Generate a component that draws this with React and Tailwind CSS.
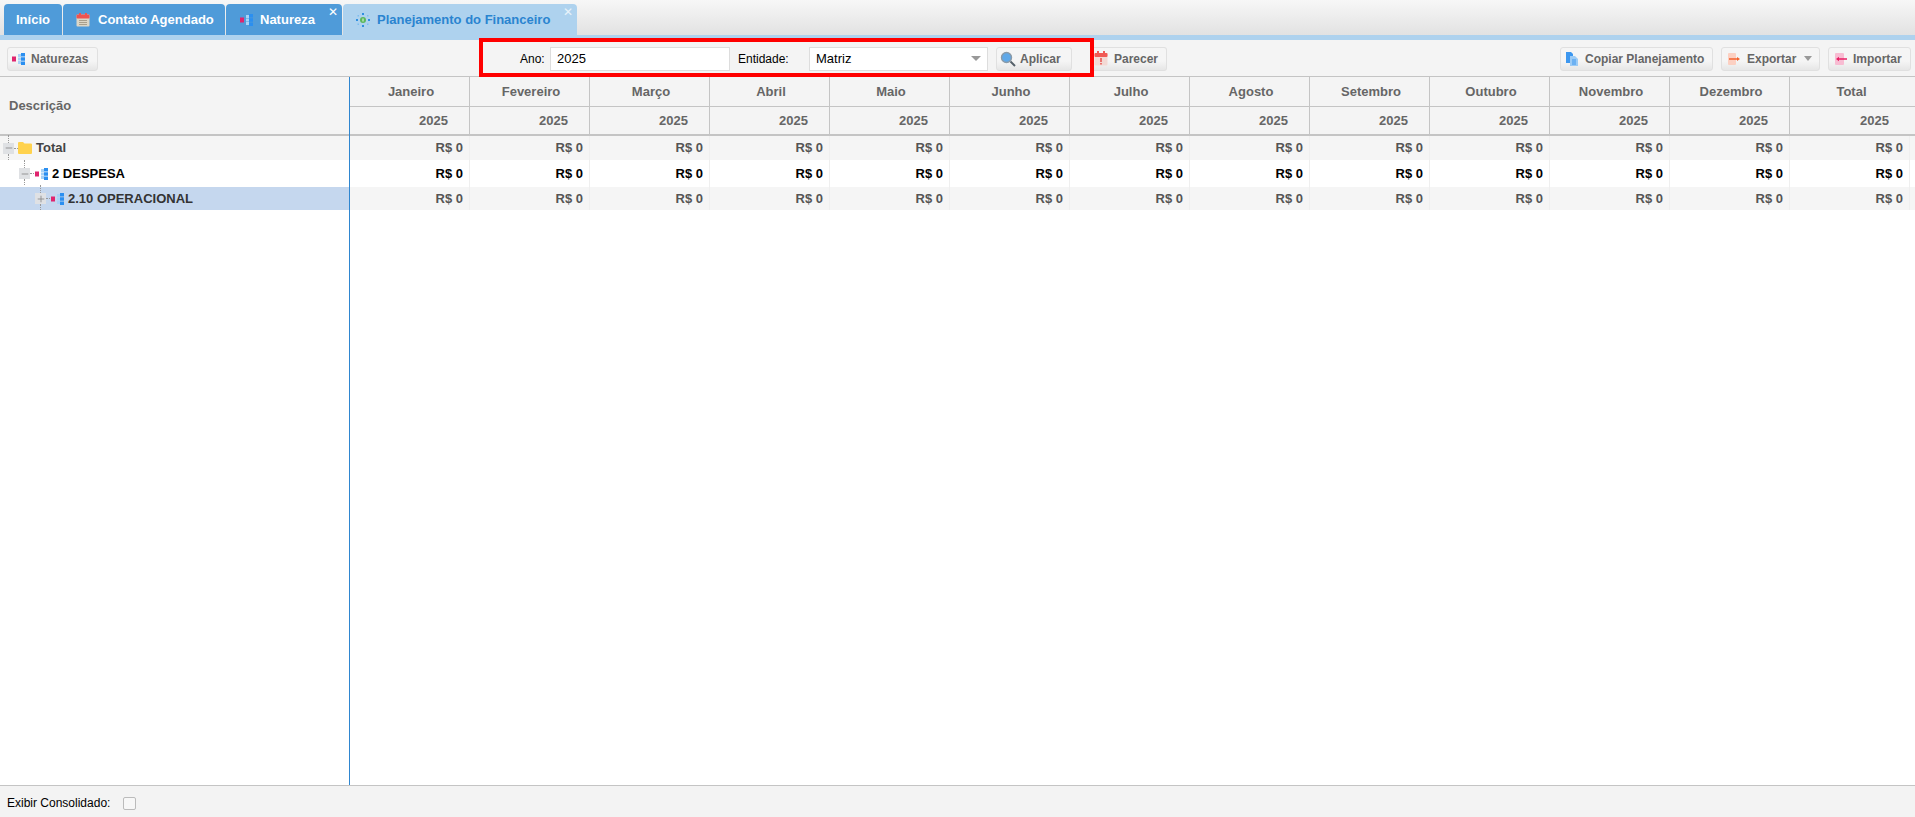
import { Plus, Minus } from "lucide-react";

const meses = ["Janeiro", "Fevereiro", "Março", "Abril", "Maio", "Junho", "Julho", "Agosto", "Setembro", "Outubro", "Novembro", "Dezembro", "Total"];

function TreeIcon({ className = "" }) {
  return (
    <svg width="13" height="12" viewBox="0 0 13 12" className={className}>
      <rect x="0" y="3.500" width="4" height="5" fill="#e0246e" />
      <path d="M6 1h3v3H6zM6 4.500h3v3H6zM6 8h3v3H6z" fill="#a8d2f6" />
      <path d="M9 0h4v3.500H9zM9 4.300h4v3.400H9zM9 8.500h4V12H9z" fill="#2b8ff0" />
    </svg>
  );
}

function CalendarIcon() {
  return (
    <svg width="14" height="14" viewBox="0 0 14 14">
      <rect x="0.500" y="1.500" width="13" height="12" rx="1" fill="#dcd6c6" />
      <rect x="0.500" y="1.500" width="13" height="4" rx="1" fill="#ef5350" />
      <rect x="3" y="0" width="2" height="3" fill="#ef5350" />
      <rect x="9" y="0" width="2" height="3" fill="#ef5350" />
      <path d="M3 7.500h8M3 9.500h8M3 11.500h8" stroke="#a89f8c" strokeWidth="1" />
    </svg>
  );
}

function PlanIcon() {
  return (
    <svg width="14" height="14" viewBox="0 0 14 14">
      <circle cx="7" cy="7" r="3" fill="#5cb85c" />
      <path d="M7 5.500v3" stroke="#e8f5e8" strokeWidth="1" />
      <path d="M6 0h2v2H6zM6 12h2v2H6zM0 6h2v2H0zM12 6h2v2h-2z" fill="#2f8fe0" />
      <path d="M1.500 2h1.500v1.500H1.500zM11 2h1.500v1.500H11zM1.500 10.500h1.500V12H1.500zM11 10.500h1.500V12H11z" fill="#7fbdee" />
    </svg>
  );
}

function SearchIcon() {
  return (
    <svg width="16" height="16" viewBox="0 0 16 16">
      <circle cx="6.500" cy="6.500" r="5" fill="#5fa8e8" stroke="#8a9aa8" strokeWidth="1.400" />
      <path d="M10.500 10.500 15 15" stroke="#55606a" strokeWidth="2" />
    </svg>
  );
}

function AlertCalendarIcon() {
  return (
    <svg width="14" height="15" viewBox="0 0 14 15">
      <rect x="0.500" y="2" width="13" height="12.500" rx="1" fill="#f3d9d4" />
      <rect x="0.500" y="2" width="13" height="4" rx="1" fill="#f05a55" />
      <rect x="3" y="0" width="2" height="3" fill="#f05a55" />
      <rect x="9" y="0" width="2" height="3" fill="#f05a55" />
      <path d="M7 7v4M7 12v1.500" stroke="#e8504c" strokeWidth="1.500" />
    </svg>
  );
}

function CopyIcon() {
  return (
    <svg width="12" height="14" viewBox="0 0 12 14">
      <path d="M0 0h5l2 2v9H0z" fill="#3d97ef" />
      <path d="M4 4h5l3 3v7H4z" fill="#9ccbf5" />
      <path d="M6 8h4M6 10h4M6 12h4" stroke="#3d97ef" strokeWidth="1" />
    </svg>
  );
}

function ExportIcon() {
  return (
    <svg width="12" height="12" viewBox="0 0 12 12">
      <rect x="0" y="0" width="8" height="12" rx="1" fill="#fcd0c2" />
      <path d="M1 6h8" stroke="#f4622e" strokeWidth="1.500" />
      <path d="M9 4l3 2-3 2z" fill="#f4622e" />
    </svg>
  );
}

function ImportIcon() {
  return (
    <svg width="12" height="12" viewBox="0 0 12 12">
      <rect x="0" y="0" width="9" height="12" rx="1" fill="#f8bcd2" />
      <path d="M4 6h8" stroke="#e91e63" strokeWidth="1.500" />
      <path d="M4 3.800 1 6l3 2.200z" fill="#e91e63" />
    </svg>
  );
}

function FolderIcon() {
  return (
    <svg width="14" height="12" viewBox="0 0 14 12">
      <path d="M0 1a1 1 0 0 1 1-1h4l1.500 1.500H13a1 1 0 0 1 1 1V11a1 1 0 0 1-1 1H1a1 1 0 0 1-1-1z" fill="#ffd24d" />
    </svg>
  );
}

function ToolButton({ icon, label, arrow, className = "" }) {
  return (
    <button className={`h-6 flex items-center rounded-[3px] border border-[#e0e0e0] bg-gradient-to-b from-[#f5f5f5] from-60% to-[#e6e6e6] text-[12px] font-bold text-[#666] ${className}`}>
      {icon}
      <span>{label}</span>
      {arrow && <span className="ml-2 border-x-[4px] border-t-[5px] border-x-transparent border-t-[#999]" />}
    </button>
  );
}

function Tab({ label, icon, width, active, close }) {
  return (
    <div className={`relative h-[31px] flex items-center rounded-t-[4px] text-[13px] font-bold ${width} ${active ? "bg-[#aed2ee] text-[#2a84d0]" : "bg-[#4f9bd9] text-white"}`}>
      {icon}
      <span>{label}</span>
      {close && <span className={`absolute right-1 top-0 text-[12px] font-normal leading-[16px] ${active ? "text-[#e8f2fa]" : "text-white"}`}>✕</span>}
    </div>
  );
}

function Expander({ open }) {
  return (
    <span className="relative w-[11px] h-[11px] shrink-0 flex items-center justify-center bg-[#dfe1e4]">
      <span className="absolute left-[5px] bottom-[11px] h-[8px] border-l border-dotted border-[#999]" />
      <span className="absolute left-[5px] top-[11px] h-[6px] border-l border-dotted border-[#999]" />
      <span className="absolute left-[11px] top-[5px] w-[4px] border-t border-dotted border-[#999]" />
      {open ? <Minus size={10} className="text-[#888]" /> : <Plus size={10} className="text-[#888]" />}
    </span>
  );
}

function ValueCells({ className = "" }) {
  return (
    <div className="flex h-full">
      {meses.map((m) => (
        <div key={m} className={`w-[120px] h-full flex items-center justify-end pr-[6px] border-r border-[#efefef] text-[13px] font-bold ${className}`}>
          R$ 0
        </div>
      ))}
    </div>
  );
}

export default function App() {
  return (
    <div className="relative h-[817px] w-[1915px] flex flex-col overflow-hidden bg-white font-['Liberation_Sans',Arial,sans-serif]">
      {/* abas */}
      <div className="h-[35px] flex items-end gap-px pl-1 bg-gradient-to-b from-[#f7f7f7] to-[#e2e2e2]">
        <Tab label="Início" width="w-[58px] pl-3" />
        <Tab label="Contato Agendado" width="w-[162px] pl-[13px]" icon={<span className="mr-[8px]"><CalendarIcon /></span>} />
        <Tab label="Natureza" width="w-[116px] pl-[14px]" close icon={<span className="mr-[7px]"><TreeIcon /></span>} />
        <Tab label="Planejamento do Financeiro" width="w-[234px] pl-[13px]" active close icon={<span className="mr-[7px]"><PlanIcon /></span>} />
      </div>
      <div className="h-[5px] bg-[#aed2ee]" />

      {/* barra de ferramentas */}
      <div className="h-[37px] shrink-0 flex items-center pt-[1px] pl-[7px] pr-1 bg-[#f4f4f4] border-b border-[#c4c4c4] text-[12px] text-black">
        <ToolButton label="Naturezas" className="w-[91px] pl-[4px]" icon={<TreeIcon className="mr-[6px]" />} />
        <span className="ml-[422px] w-[30px]">Ano:</span>
        <input readOnly value="2025" className="h-6 w-[180px] px-[6px] border border-[#ddd] bg-white text-[13px] outline-none" />
        <span className="ml-2 w-[71px]">Entidade:</span>
        <div className="h-6 w-[179px] px-[6px] flex items-center justify-between border border-[#ddd] bg-white text-[13px]">
          <span>Matriz</span>
          <span className="border-x-[5px] border-t-[5px] border-x-transparent border-t-[#999]" />
        </div>
        <ToolButton label="Aplicar" className="ml-[8px] w-[76px] pl-[3px]" icon={<span className="mr-[4px]"><SearchIcon /></span>} />
        <ToolButton label="Parecer" className="ml-[19px] w-[76px] pl-[3px] border-l-0" icon={<span className="mr-[6px]"><AlertCalendarIcon /></span>} />
        <div className="ml-auto flex gap-2">
          <ToolButton label="Copiar Planejamento" className="w-[153px] pl-[5px]" icon={<span className="mr-[7px]"><CopyIcon /></span>} />
          <ToolButton label="Exportar" className="w-[99px] pl-[6px]" arrow icon={<span className="mr-[7px]"><ExportIcon /></span>} />
          <ToolButton label="Importar" className="w-[83px] pl-[6px]" icon={<span className="mr-[6px]"><ImportIcon /></span>} />
        </div>
      </div>

      {/* grade */}
      <div className="flex-1 flex min-h-0">
        <div className="w-[350px] shrink-0 border-r border-[#2f86d0] flex flex-col">
          <div className="h-[59px] flex items-center pl-[9px] bg-[#f4f4f4] border-b-2 border-[#c4c4c4] text-[13px] font-bold text-[#666]">Descrição</div>
          <div className="h-[24px] flex items-center pl-[3px] gap-[4px] bg-[#f5f5f5] text-[13px] font-bold text-[#444]">
            <Expander open />
            <FolderIcon />
            <span>Total</span>
          </div>
          <div className="h-[27px] flex items-center pl-[19px] bg-white text-[13px] font-bold text-black">
            <Expander open />
            <TreeIcon className="ml-[5px] mr-[4px]" />
            <span>2 DESPESA</span>
          </div>
          <div className="h-[23px] flex items-center pl-[35px] bg-[#c5d7ee] text-[13px] font-bold text-[#333]">
            <Expander />
            <TreeIcon className="ml-[5px] mr-[4px]" />
            <span>2.10 OPERACIONAL</span>
          </div>
        </div>

        <div className="flex-1 flex flex-col min-w-0">
          <div className="flex h-[30px] bg-[#f4f4f4] border-b border-[#c4c4c4] pr-[5px]">
            {meses.map((m) => (
              <div key={m} className="w-[120px] flex items-center justify-center pl-[3px] border-r border-[#c4c4c4] last:border-r-0 text-[13px] font-bold text-[#666]">{m}</div>
            ))}
          </div>
          <div className="flex h-[29px] bg-[#f4f4f4] border-b-2 border-[#c4c4c4]">
            {meses.map((m) => (
              <div key={m} className="w-[120px] flex items-center justify-end pr-[21px] border-r border-[#c4c4c4] last:border-r-0 text-[13px] font-bold text-[#666]">2025</div>
            ))}
          </div>
          <div className="h-[24px] bg-[#f5f5f5]"><ValueCells className="text-[#555]" /></div>
          <div className="h-[27px] bg-white"><ValueCells className="text-black" /></div>
          <div className="h-[23px] bg-[#f5f5f5]"><ValueCells className="text-[#555]" /></div>
        </div>
      </div>

      {/* rodapé */}
      <div className="h-[32px] shrink-0 flex items-center pl-[7px] bg-[#f3f3f3] border-t border-[#c4c4c4] text-[12px] text-black">
        <span className="mt-[2px]">Exibir Consolidado:</span>
        <span className="ml-[13px] mt-[4px] w-[13px] h-[13px] rounded-[2px] border border-[#bbb] bg-[#f7f7f7]" />
      </div>

      {/* destaque vermelho */}
      <div className="absolute left-[479px] top-[38px] w-[615px] h-[39px] border-[4px] border-[#ff0000] pointer-events-none" />
    </div>
  );
}
